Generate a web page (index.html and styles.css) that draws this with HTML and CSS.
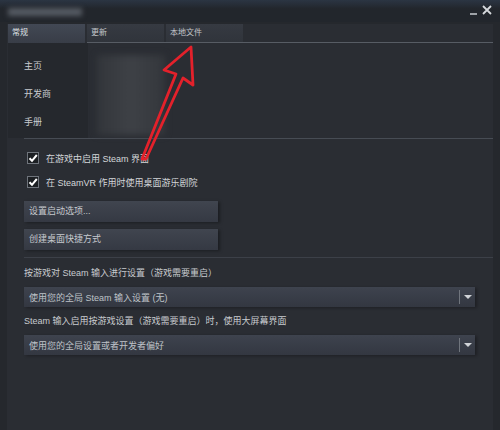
FILE: index.html
```html
<!DOCTYPE html>
<html>
<head>
  <title>属性</title>
  <link rel="stylesheet" href="styles.css">
</head>
<body>
  <div class="titlebar">
    <div class="title-blur"></div>
    <div class="controls">
      <svg width="26" height="12" viewBox="0 0 26 12">
        <path d="M2 10 H9" stroke="#c8ccd1" stroke-width="1.5"/>
        <path d="M15 2 L23 10 M23 2 L15 10" stroke="#d6d9dd" stroke-width="1.8"/>
      </svg>
    </div>
  </div>

  <div class="window">
    <div class="tabs">
      <div class="tab active">常规</div>
      <div class="tab-rest">
        <div class="tab">更新</div>
        <div class="tab">本地文件</div>
      </div>
    </div>

    <div class="top">
      <ul class="sidenav">
        <li>主页</li>
        <li>开发商</li>
        <li>手册</li>
      </ul>
      <div class="cover"></div>
    </div>

    <div class="content">
      <hr class="rule">

      <label class="check-row">
        <span class="checkbox">
          <svg width="12" height="12" viewBox="0 0 12 12"><path d="M2.5 6.2 L5 8.8 L9.8 3" fill="none" stroke="#fff" stroke-width="2"/></svg>
        </span>
        在游戏中启用 Steam 界面
      </label>
      <label class="check-row">
        <span class="checkbox">
          <svg width="12" height="12" viewBox="0 0 12 12"><path d="M2.5 6.2 L5 8.8 L9.8 3" fill="none" stroke="#fff" stroke-width="2"/></svg>
        </span>
        在 SteamVR 作用时使用桌面游乐剧院
      </label>

      <div class="button">设置启动选项...</div>
      <div class="button">创建桌面快捷方式</div>

      <hr class="rule rule-low">

      <div class="field-label">按游戏对 Steam 输入进行设置（游戏需要重启）</div>
      <div class="dropdown">
        <span class="dropdown-text">使用您的全局 Steam 输入设置 (无)</span>
        <span class="dropdown-arrow"></span>
      </div>

      <div class="field-label">Steam 输入启用按游戏设置（游戏需要重启）时，使用大屏幕界面</div>
      <div class="dropdown">
        <span class="dropdown-text">使用您的全局设置或者开发者偏好</span>
        <span class="dropdown-arrow"></span>
      </div>
    </div>
  </div>

  <!-- annotation arrow drawn over the screenshot -->
  <svg class="annotation" width="500" height="430" viewBox="0 0 500 430">
    <polygon points="142,159 176,74 164,70 191,47 193,85 183,78 146,159" fill="none" stroke="#e3212b" stroke-width="2.8" stroke-linejoin="round"/>
  </svg>
</body>
</html>
```

FILE: styles.css
```css
body {
  margin: 0;
  width: 500px;
  height: 430px;
  overflow: hidden;
  position: relative;
  display: flex;
  flex-direction: column;
  background-color: #25282d;
  font-family: "Liberation Sans", "Noto Sans CJK SC", sans-serif;
  font-size: 9px;
  color: #c6c9cd;
}

.titlebar {
  height: 22px;
  flex-shrink: 0;
  display: flex;
  align-items: center;
  justify-content: space-between;
  padding: 0 6px 0 8px;
  background: linear-gradient(#2b3543, #22262c 40%);
}

.title-blur {
  width: 74px;
  height: 8px;
  margin-top: 2px;
  background-color: #555a62;
  filter: blur(2.5px);
}

.controls {
  display: flex;
  margin-top: -2px;
}

.window {
  flex: 1;
  margin: 2px 7px 0 7px;
  padding-left: 1px;
  background-color: #2a2d33;
  display: flex;
  flex-direction: column;
}

.tabs {
  display: flex;
  gap: 2px;
  height: 19px;
}

.tab {
  width: 77px;
  height: 18px;
  padding-left: 4px;
  box-sizing: border-box;
  line-height: 18px;
  font-size: 8px;
  color: #c3c6ca;
  background: linear-gradient(#363a42, #30343b);
}

.tab.active {
  height: 19px;
  background: linear-gradient(#424854, #383d47);
  color: #dfe2e5;
}

.tab-rest {
  flex: 1;
  display: flex;
  gap: 2px;
  border-bottom: 1px solid #575c64;
}

.top {
  height: 95px;
  display: flex;
}

.sidenav {
  list-style: none;
  margin: 0;
  padding: 9px 0 0 16px;
  width: 64px;
  background-color: #25282d;
}

.sidenav li {
  height: 28px;
  line-height: 28px;
  color: #c9ccd0;
}

.cover {
  width: 68px;
  height: 80px;
  margin: 12px 0 0 9px;
  background: linear-gradient(90deg, #33363b, #3e4146 50%, #34373c);
  filter: blur(3px);
}

.content {
  padding-left: 16px;
  display: flex;
  flex-direction: column;
}

.rule {
  margin: 0;
  border: none;
  height: 1px;
  background-color: #474c54;
}

.rule-low {
  margin-top: 7px;
  background-color: #3c4048;
}

.check-row {
  height: 24px;
  display: flex;
  align-items: center;
  gap: 7px;
  padding-left: 3px;
  color: #d4d7da;
}

.check-row:first-of-type {
  margin-top: 7px;
}

.checkbox {
  width: 12px;
  height: 12px;
  box-sizing: border-box;
  border: 1px solid #6f747c;
  background-color: #1c1f23;
  display: flex;
  align-items: center;
  justify-content: center;
}

.checkbox svg {
  margin: -1px;
}

.button {
  width: 194px;
  height: 21px;
  margin-top: 7px;
  padding-left: 5px;
  box-sizing: border-box;
  line-height: 21px;
  background: linear-gradient(#40454f, #353943);
  box-shadow: 2px 1px 3px rgba(0, 0, 0, 0.35);
  color: #c7cacf;
}

.field-label {
  height: 16px;
  line-height: 16px;
  margin-top: 7px;
  color: #c8cbcf;
}

.dropdown {
  width: 451px;
  height: 20px;
  margin-top: 6px;
  display: flex;
  align-items: center;
  background: linear-gradient(#3e434e, #333741);
  box-shadow: 2px 1px 3px rgba(0, 0, 0, 0.3);
}

.dropdown + .field-label {
  margin-top: 6px;
}

.dropdown-text {
  flex: 1;
  padding-left: 5px;
  color: #bfc3c8;
}

.dropdown-arrow {
  width: 15px;
  height: 14px;
  border-left: 1px solid #70757d;
  display: flex;
  align-items: center;
  justify-content: center;
}

.dropdown-arrow::after {
  content: "";
  border-left: 4px solid transparent;
  border-right: 4px solid transparent;
  border-top: 4px solid #d0d3d7;
}

.annotation {
  position: absolute;
  left: 0;
  top: 0;
  pointer-events: none;
}
```
